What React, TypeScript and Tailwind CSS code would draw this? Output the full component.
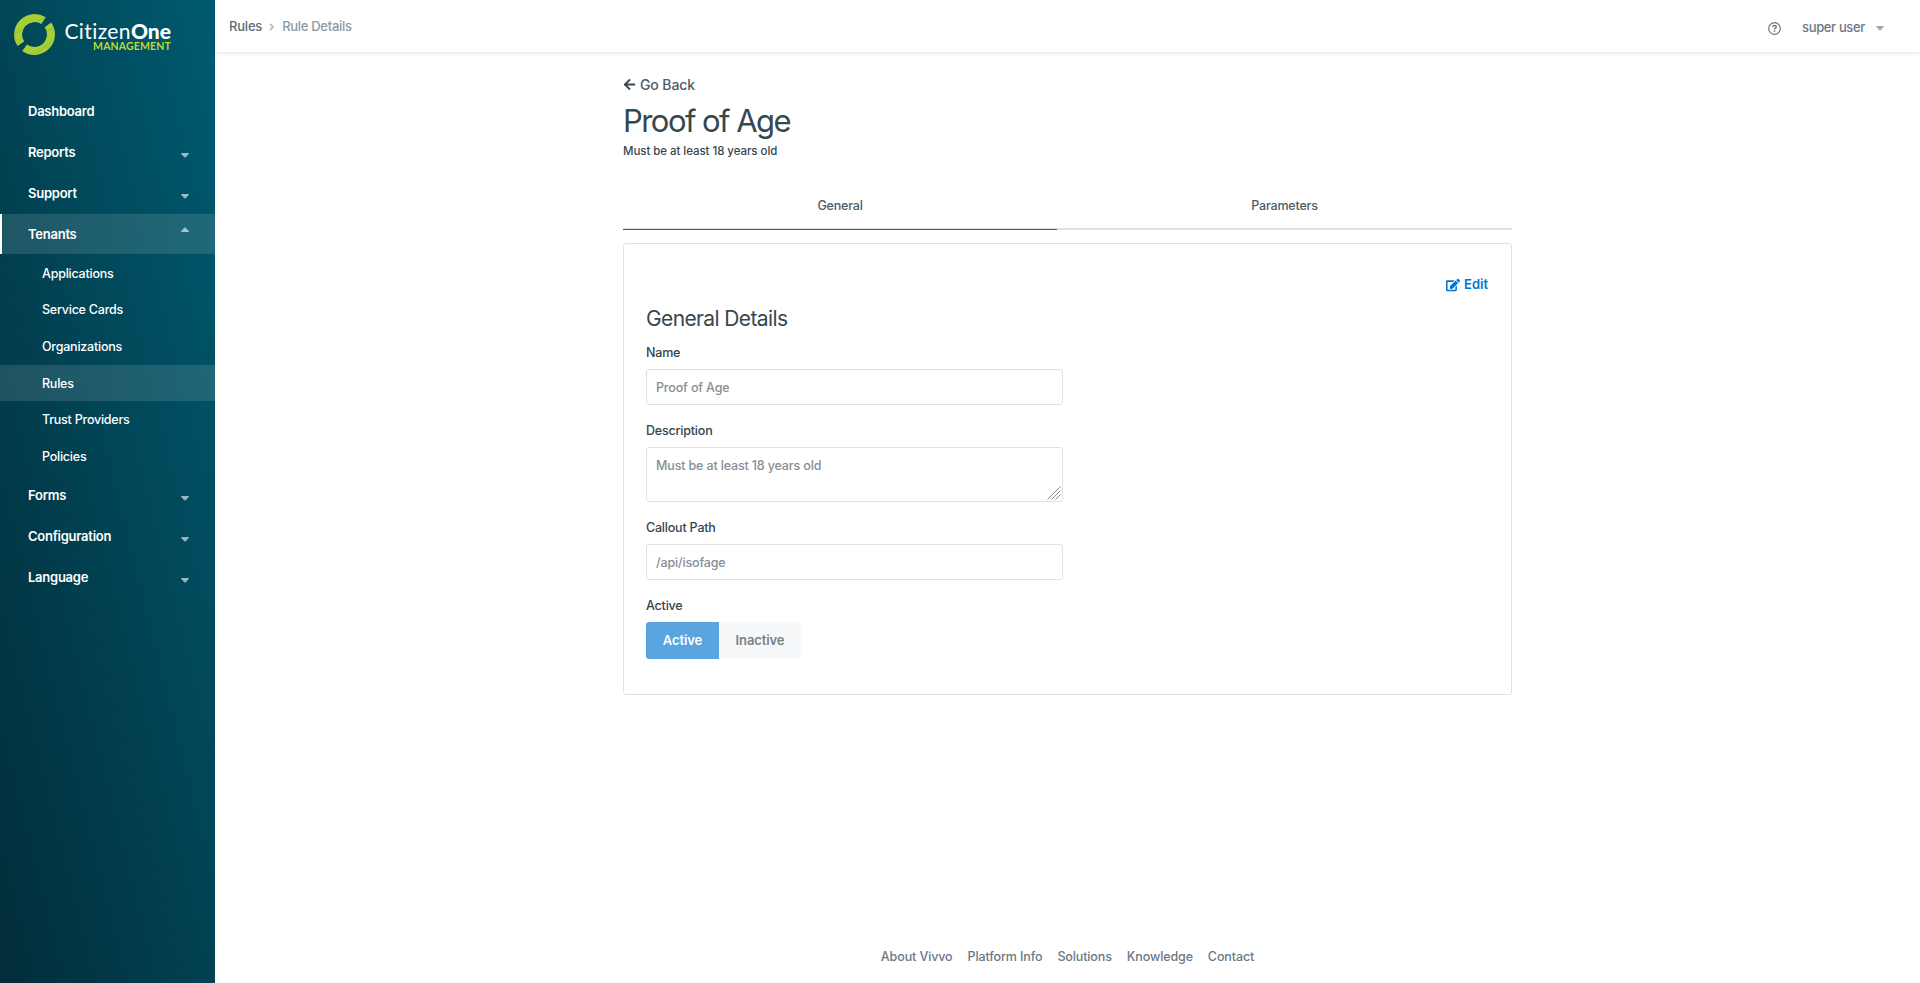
import React from "react";
import { FaArrowLeft, FaEdit } from "react-icons/fa";

type Child = { label: string; active?: boolean };
type Item = { label: string; children?: Child[]; open?: boolean; caret?: boolean };

const menu: Item[] = [
  { label: "Dashboard" },
  { label: "Reports", caret: true },
  { label: "Support", caret: true },
  {
    label: "Tenants",
    caret: true,
    open: true,
    children: [
      { label: "Applications" },
      { label: "Service Cards" },
      { label: "Organizations" },
      { label: "Rules", active: true },
      { label: "Trust Providers" },
      { label: "Policies" },
    ],
  },
  { label: "Forms", caret: true },
  { label: "Configuration", caret: true },
  { label: "Language", caret: true },
];

function Caret({ up = false, className = "" }: { up?: boolean; className?: string }) {
  return (
    <svg width="8" height="5" viewBox="0 0 8 5" className={className}>
      <path d={up ? "M0 4.2L3.3 .8Q4 .1 4.7 .8L8 4.2Q8 5 7.3 5H.7Q0 5 0 4.2Z" : "M0 .8Q0 0 .7 0H7.3Q8 0 8 .8L4.7 4.2Q4 4.9 3.3 4.2Z"} fill="currentColor" />
    </svg>
  );
}

function Logo() {
  return (
    <div className="flex h-[91px] items-start pl-[14px] pt-[14px]">
      <svg width="41" height="41" viewBox="0 0 41 41">
        <g fill="none" stroke="#a6ce39" strokeWidth="8">
          <path d="M6.9 29.8A16.5 16.5 0 0 1 29.5 6.7" />
          <path d="M33.9 10.9A16.5 16.5 0 0 1 10.6 33.7" />
        </g>
        <path d="M23 8L30 3M32.5 18.5L39.5 13.5M1 20L8 15.5M22 39.5L37 28" stroke="#7fae3c" strokeWidth=".5" />
      </svg>
      <div className="ml-[9px] mt-[5px] flex w-[107px] flex-col items-end font-[Lato,sans-serif] text-white">
        <div className="whitespace-nowrap text-[21px] leading-[24px] tracking-[0.4px]">
          Citizen<span className="font-black tracking-normal">One</span>
        </div>
        <div className="-mt-[3px] text-[10.5px] font-bold leading-[13px] tracking-[0.15px] text-[#bfd730]">MANAGEMENT</div>
      </div>
    </div>
  );
}

function Sidebar() {
  return (
    <aside className="flex w-[215px] shrink-0 flex-col bg-[linear-gradient(256deg,#005b70_0%,#022c39_100%)] text-white">
      <Logo />
      <nav>
        {menu.map((m) => (
          <div key={m.label}>
            <div className={"mb-px flex h-10 items-center justify-between border-l-2 px-[26px] text-[13px] font-semibold tracking-[-0.25px] " + (m.open ? "border-white bg-white/12" : "border-transparent")}>
              <span className="pt-[2px]">{m.label}</span>
              {m.caret && <Caret up={m.open} className={m.open ? "mb-[9px] text-white/60" : "mt-[6px] text-white/60"} />}
            </div>
            {m.children && (
              <ul className="h-[220px]">
                {m.children.map((c) => (
                  <li key={c.label} className={"mb-[0.67px] flex h-9 items-center pl-[42px] pt-[2px] text-[12.5px] font-medium tracking-[-0.23px] " + (c.active ? "bg-white/12" : "")}>
                    {c.label}
                  </li>
                ))}
              </ul>
            )}
          </div>
        ))}
      </nav>
    </aside>
  );
}

function Header() {
  return (
    <header className="flex h-[52px] shrink-0 items-center justify-between pl-[14px] pr-[36px] text-[13px] font-medium shadow-[0_1px_4px_rgba(0,0,0,0.12)]">
      <div className="flex items-center pt-[2px]">
        <span className="tracking-[-0.2px] text-[#5f6b76]">Rules</span>
        <svg width="6" height="8" viewBox="0 0 6 8" className="ml-[7px] mr-[7px]">
          <path d="M1 .8L4.2 4L1 7.2" fill="none" stroke="#b9bfc6" strokeWidth="1.8" />
        </svg>
        <span className="tracking-[-0.3px] text-[#8d99a6]">Rule Details</span>
      </div>
      <div className="flex items-center pt-[4px] text-[#6b7885]">
        <svg width="13" height="13" viewBox="0 0 13 13" className="mr-[21px]" fill="none" stroke="currentColor">
          <circle cx="6.5" cy="6.5" r="5.8" strokeWidth="1.2" />
          <path d="M4.7 5.1C4.8 3.9 5.6 3.5 6.5 3.5C7.6 3.5 8.3 4.1 8.3 5C8.3 6.2 6.5 6.2 6.5 7.5" strokeWidth="1.4" />
          <path d="M6.5 8.4V9.9" strokeWidth="1.5" />
        </svg>
        <span className="mr-[11px] tracking-[-0.35px]">super user</span>
        <Caret className="text-[#a3a9b0]" />
      </div>
    </header>
  );
}

function Field({ label, children }: { label: string; children: React.ReactNode }) {
  return (
    <div className="mb-[17px]">
      <div className="mb-[8px] h-[17px] text-[12.5px] leading-[17px] tracking-[-0.2px] text-[#34444f]">{label}</div>
      {children}
    </div>
  );
}

const box = "w-[417px] rounded-[3px] border border-[#dee2e6] bg-white px-[9px] text-[12.5px] tracking-[-0.15px] text-[#868e96]";

export default function App() {
  return (
    <div className="flex h-[983px] w-full overflow-hidden bg-white font-[Inter,sans-serif] text-[13px]">
      <Sidebar />
      <div className="flex min-w-0 flex-1 flex-col">
        <Header />
        <main className="mx-auto flex w-[889px] flex-1 flex-col font-medium">
          <div className="mt-[21px] flex h-[22px] items-center text-[14px] tracking-[-0.1px] text-[#4c5c66]">
            <FaArrowLeft className="mr-[4px] size-[13px] text-[#36474f]" />
            <span>Go Back</span>
          </div>
          <h1 className="mt-[5px] h-[41px] text-[31px] font-normal leading-[41px] tracking-[-1.55px] text-[#36474f]">Proof of Age</h1>
          <div className="mt-px h-[18px] text-[11.5px] leading-[18px] tracking-[-0.06px] text-[#36474f]">Must be at least 18 years old</div>
          <div className="mt-[23px] flex h-[47px] text-center text-[12.5px] leading-[46px] tracking-[-0.2px] text-[#4c5c66]">
            <div className="flex w-[434px] flex-col border-b border-[#0071ce]">
              <div className="h-[46px] border-b border-[#dee2e6]">General</div>
            </div>
            <div className="w-[455px] border-b-2 border-[#dee2e6]">Parameters</div>
          </div>
          <section className="mt-[13px] flex h-[452px] flex-col rounded-[3px] border border-[#dee2e6] pl-[22px] pr-[23px]">
            <div className="mt-[31px] flex h-[20px] items-center justify-end font-semibold text-[#0076d1]">
              <FaEdit className="mb-px mr-[4px] size-[14px]" />
              Edit
            </div>
            <h2 className="mb-[11px] mt-[10px] h-[28px] text-[21px] font-normal leading-[28px] tracking-[-0.62px] text-[#36474f]">General Details</h2>
            <Field label="Name">
              <div className={box + " h-9 leading-[36px]"}>Proof of Age</div>
            </Field>
            <Field label="Description">
              <textarea readOnly className={box + " block h-[55px] resize-none py-[9px] leading-[18px] outline-none"} defaultValue="Must be at least 18 years old" />
              <div className="relative">
                <svg width="14" height="14" viewBox="0 0 14 14" className="absolute -top-[16px] left-[401px]" stroke="#8a8a8a" strokeWidth="1">
                  <path d="M.5 13.5L13.5 .5M4.5 13.5L13.5 4.5M8.5 13.5L13.5 8.5" />
                </svg>
              </div>
            </Field>
            <Field label="Callout Path">
              <div className={box + " h-9 leading-[36px]"}>/api/isofage</div>
            </Field>
            <Field label="Active">
              <div className="flex h-[37px] text-center font-semibold leading-[37px] tracking-[-0.1px]">
                <div className="w-[73px] rounded-l-[3px] bg-[#5aa5df] text-white">Active</div>
                <div className="w-[82px] rounded-r-[3px] bg-[#f6f8fa] text-[#7b8187]">Inactive</div>
              </div>
            </Field>
          </section>
          <footer className="mb-[16px] mt-auto flex h-[20px] items-center justify-center gap-[15px] text-[12.5px] tracking-[-0.12px] text-[#6b7885]">
            <span>About Vivvo</span>
            <span>Platform Info</span>
            <span>Solutions</span>
            <span>Knowledge</span>
            <span>Contact</span>
          </footer>
        </main>
      </div>
    </div>
  );
}
